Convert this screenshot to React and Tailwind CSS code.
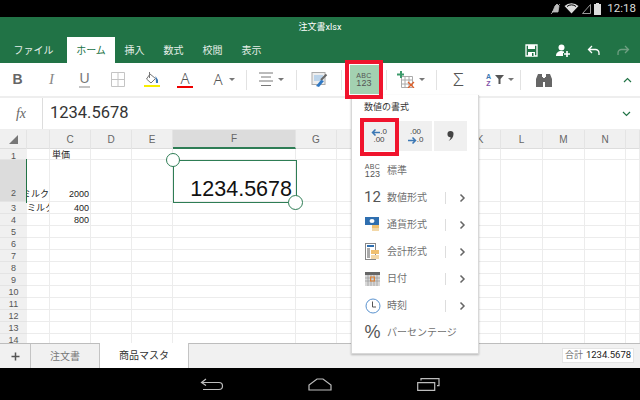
import React from "react";

const JP = "font-['Roboto','Noto_Sans_CJK_JP',sans-serif]";

const colW = "grid-cols-[27px_23px_41px_41px_41px_123px_41px_41px_41px_41px_41px_42px_42px_41px_14px]";
const cols = ["", "", "C", "D", "E", "F", "G", "H", "I", "J", "K", "L", "M", "N", ""];
const rowNums = [1, 2, 3, 4, 5, 6, 7, 8, 9, 10, 11, 12, 13, 14];
const cellData = {
  "1-2": { t: "単価", c: "justify-start pl-[2px] items-end leading-[7px]" },
  "2-1": { t: "ミルク", c: "justify-end items-end pb-[2px] leading-[10px]" },
  "2-2": { t: "2000", c: "justify-end pr-[1px] items-end pb-[2px] leading-[10px]" },
  "3-1": { t: "ミルク", c: "justify-start items-center pt-[1px] leading-[10px]" },
  "3-2": { t: "400", c: "justify-end pr-[1px] items-center pt-[1px] leading-[10px]" },
  "4-2": { t: "800", c: "justify-end pr-[1px] items-center pt-[1px] leading-[10px]" },
};

function Sep() {
  return <div className="w-[1px] h-[20px] bg-[#e2e2e2] shrink-0" />;
}

function Caret() {
  return <span className="inline-block w-0 h-0 border-l-[3px] border-r-[3px] border-t-[3px] border-l-transparent border-r-transparent border-t-[#777777]" />;
}

function Tool({ w, children, className = "" }) {
  return <div className={`h-full flex items-center justify-center shrink-0 ${className}`} style={{ width: w }}>{children}</div>;
}

function Chevron() {
  return (
    <svg width="7" height="10" viewBox="0 0 7 10"><path d="M1.500 1.500 5 5 1.500 8.500" fill="none" stroke="#666" strokeWidth="1.500" /></svg>
  );
}

function AbcIcon() {
  return (
    <div className="flex flex-col items-center leading-none text-[#555555] font-['Liberation_Sans',sans-serif]">
      <span className="text-[7px] leading-[7px] tracking-[0.3px]">ABC</span>
      <span className="text-[9px] leading-[9px] tracking-[0.2px]">123</span>
    </div>
  );
}

const icons = {
  abc: <AbcIcon />,
  n12: <span className="text-[15px] text-[#555555] font-['Roboto',sans-serif]">12</span>,
  money: (
    <svg width="16" height="17" viewBox="0 0 16 17">
      <rect x="0" y="1" width="14" height="8" fill="#2f6fb0" />
      <ellipse cx="7" cy="5" rx="2.500" ry="2" fill="#fff" />
      <rect x="7" y="9" width="7" height="3" fill="#f0c070" />
      <rect x="7" y="12" width="7" height="3" fill="#f3d8a8" />
    </svg>
  ),
  acct: (
    <svg width="16" height="18" viewBox="0 0 16 18">
      <rect x="0.500" y="0.500" width="10" height="16" fill="#fff" stroke="#888" />
      <rect x="2" y="2" width="7" height="2" fill="#2f6fb0" />
      <rect x="2" y="5" width="3" height="10" fill="#aaa" />
      <rect x="6" y="7" width="8" height="4" fill="#f0c070" />
      <rect x="6" y="12" width="8" height="4" fill="#f3d8a8" />
    </svg>
  ),
  date: (
    <svg width="15" height="14" viewBox="0 0 15 14">
      <rect x="0" y="0" width="15" height="14" fill="#d8d8d8" />
      <rect x="0" y="0" width="15" height="3" fill="#666" />
      <path d="M0 6h15M0 9h15M3 3v11M6 3v11M9 3v11M12 3v11" stroke="#999" strokeWidth="0.700" />
      <rect x="5.500" y="5" width="4" height="4" fill="none" stroke="#e08030" />
    </svg>
  ),
  time: (
    <svg width="16" height="16" viewBox="0 0 16 16">
      <circle cx="8" cy="8" r="7" fill="#fff" stroke="#5b93cf" />
      <path d="M7.500 3.500V9H11" fill="none" stroke="#555" />
    </svg>
  ),
  pct: <span className="text-[18px] text-[#555555] font-['Liberation_Sans',sans-serif]">%</span>,
  frac: <span className="text-[20px] text-[#555555] font-['Liberation_Sans',sans-serif]">¼</span>,
};

const menuItems = [
  ["abc", "標準", false],
  ["n12", "数値形式", true],
  ["money", "通貨形式", true],
  ["acct", "会計形式", true],
  ["date", "日付", true],
  ["time", "時刻", true],
  ["pct", "パーセンテージ", false],
  ["frac", "分数", false],
];

function Menu() {
  return (
    <div className={`absolute left-[351px] top-[95px] w-[128px] h-[259px] bg-white overflow-hidden border border-[#d8d8d8] border-t-0 shadow-[0_1px_2px_rgba(0,0,0,0.25)] ${JP}`}>
      <div className="pl-[12px] pt-[6px] h-[26px] text-[9px] leading-[13px] text-[#333333]">数値の書式</div>
      <div className="flex pl-[9px] gap-[2px] h-[30px]">
        <div className="relative w-[36px] h-full bg-[#f0f0f0] flex flex-col items-center justify-center text-[8px] leading-[8px] text-[#444444] font-['Liberation_Sans',sans-serif]">
          <div className="flex items-center"><svg width="9" height="7" viewBox="0 0 9 7"><path d="M9 3.500H2M4.500 .5 1.500 3.500l3 3" fill="none" stroke="#3c78b5" strokeWidth="1.500" /></svg><span>.0</span></div>
          <span>.00</span>
        </div>
        <div className="w-[33px] h-full bg-[#f0f0f0] flex flex-col items-center justify-center text-[8px] leading-[8px] text-[#444444] font-['Liberation_Sans',sans-serif]">
          <span>.00</span>
          <div className="flex items-center"><svg width="9" height="7" viewBox="0 0 9 7"><path d="M0 3.500h7M4.500 .5l3 3-3 3" fill="none" stroke="#3c78b5" strokeWidth="1.500" /></svg><span>.0</span></div>
        </div>
        <div className="w-[33px] h-full bg-[#f0f0f0] flex items-center justify-center">
          <svg width="7" height="10" viewBox="0 0 7 10"><path d="M3.500 0a3 3 0 0 1 3 3.200C6.500 6 4.500 8.500 1.500 10 3 8.500 3.500 7.500 3.600 6.200A3 3 0 0 1 3.500 0Z" fill="#444" /></svg>
        </div>
      </div>
      <div className="pt-[6px]">
        {menuItems.map(([ic, label, sub]) => (
          <div key={label} className="flex items-center h-[27px]">
            <div className="w-[35px] pl-[12px] pr-[6px] flex items-center justify-center shrink-0">{icons[ic]}</div>
            <div className="text-[10px] text-[#707070] w-[58px] shrink-0 whitespace-nowrap">{label}</div>
            {sub && <div className="w-[1px] h-[12px] bg-[#dddddd] shrink-0" />}
            {sub && <div className="ml-[13px]"><Chevron /></div>}
          </div>
        ))}
      </div>
    </div>
  );
}

function Sheet() {
  return (
    <div className="relative h-[213px] overflow-hidden bg-white font-['Liberation_Sans','Noto_Sans_CJK_JP',sans-serif]">
      <div className={`grid ${colW} h-[19px] bg-[#f0f0f0] border-b border-[#dddddd]`}>
        {cols.map((c, i) => (
          <div key={i} className={`flex items-center justify-center text-[10px] text-[#666666] border-r border-[#e4e4e4] ${c === "F" ? "bg-[#dcdcdc] border-b-2 border-b-[#2e7d55] h-[19px]" : ""}`}>
            {i === 0 ? <svg width="9" height="9" viewBox="0 0 9 9"><path d="M9 0V9H0Z" fill="#777" /></svg> : c}
          </div>
        ))}
      </div>
      {rowNums.map((r) => (
        <div key={r} className={`grid ${colW} ${r === 1 ? "h-[11px]" : r === 2 ? "h-[42px]" : "h-[12px]"}`}>
          {cols.map((_, i) => {
            const d = cellData[`${r}-${i}`];
            if (i === 0) {
              return (
                <div key={i} className={`flex items-end justify-center text-[9px] text-[#555555] border-b border-[#e4e4e4] ${r === 1 ? "leading-[6px]" : "leading-[9px]"} ${r === 2 ? "bg-[#dcdcdc] pb-[3px]" : "bg-[#f0f0f0]"}`}>{r}</div>
              );
            }
            return (
              <div key={i} className={`flex overflow-hidden whitespace-nowrap text-[9px] text-[#222222] border-r border-b border-[#ececec] ${d ? d.c : ""}`}>{d ? d.t : ""}</div>
            );
          })}
        </div>
      ))}
      <div className="absolute left-[26px] top-[29px] w-[1px] h-[44px] bg-[#217346]" />
      <div className="absolute left-[173px] top-[30px] w-[124px] h-[43px] border-[1.500px] border-[#2e7d55] flex items-end justify-end pr-[4px] text-[21.500px] leading-[25px] text-[#111111]">1234.5678</div>
      <div className="absolute left-[166px] top-[23px] w-[14px] h-[14px] rounded-full border-[1.500px] border-[#2e7d55] bg-white" />
      <div className="absolute left-[288px] top-[65px] w-[15px] h-[15px] rounded-full border-[1.500px] border-[#2e7d55] bg-white" />
    </div>
  );
}

export default function App() {
  return (
    <div className={`relative w-[640px] h-[400px] overflow-hidden bg-white ${JP}`}>
      {/* status bar */}
      <div className="h-[17px] bg-black flex items-center justify-end pr-[4px] gap-[3px] text-white">
        <svg width="11" height="12" viewBox="0 0 11 12"><path d="M7 1 5 3 3 8l-1 1h6L9 3ZM1 11 10 1" fill="#bbb" stroke="#bbb" strokeWidth="0.800" /></svg>
        <svg width="15" height="11" viewBox="0 0 15 11"><path d="M7.500 10.500 0.500 3A10 10 0 0 1 14.500 3Z" fill="#ddd" /><path d="M3 3.500a7 7 0 0 1 9 0" stroke="#000" fill="none" /></svg>
        <svg width="9" height="10" viewBox="0 0 9 10"><path d="M.5 9.500 8.500.5v9Z" fill="none" stroke="#999" /></svg>
        <svg width="7" height="12" viewBox="0 0 7 12"><path d="M2 0h3v1h2v11H0V1h2Z" fill="#ddd" /></svg>
        <span className="text-[11.500px] leading-[17px] text-[#dddddd] ml-[3px] font-['Roboto',sans-serif]">12:18</span>
      </div>

      {/* green header */}
      <div className="h-[46px] bg-[#217346] text-white">
        <div className="h-[20px] flex items-center justify-center text-[9px] pt-[1px]">注文書xlsx</div>
        <div className="flex h-[26px]">
          <div className="w-[67px] flex items-center justify-center text-[10px] text-[#e6efe9] shrink-0">ファイル</div>
          <div className="w-[48px] bg-white text-[#217346] flex items-center justify-center text-[10px] shrink-0">ホーム</div>
          <div className="w-[39px] flex items-center justify-center text-[10px] text-[#e6efe9] shrink-0">挿入</div>
          <div className="w-[39px] flex items-center justify-center text-[10px] text-[#e6efe9] shrink-0">数式</div>
          <div className="w-[39px] flex items-center justify-center text-[10px] text-[#e6efe9] shrink-0">校閲</div>
          <div className="w-[39px] flex items-center justify-center text-[10px] text-[#e6efe9] shrink-0">表示</div>
          <div className="flex-1" />
          <div className="w-[32px] flex items-center justify-center">
            <svg width="13" height="13" viewBox="0 0 13 13"><path d="M1 1h11v11H1Z" fill="none" stroke="#fff" strokeWidth="1.300" /><rect x="3" y="1" width="7" height="4" fill="#fff" /><rect x="3" y="8" width="7" height="4" fill="#fff" /><rect x="7" y="9" width="1.500" height="3" fill="#217346" /></svg>
          </div>
          <div className="w-[32px] flex items-center justify-center">
            <svg width="14" height="13" viewBox="0 0 14 13"><circle cx="5.500" cy="3.500" r="3" fill="#fff" /><path d="M0 12c0-3 2-5 5.500-5 1 0 2 .2 2.500.5V9H7v3Z" fill="#fff" /><path d="M11 7v6M8 10h6" stroke="#fff" strokeWidth="1.600" /></svg>
          </div>
          <div className="w-[29px] flex items-center justify-center">
            <svg width="13" height="11" viewBox="0 0 13 11"><path d="M5 1 1.500 4.500 5 8M2 4.500h6.500a3.500 3.500 0 0 1 3.500 3.500v2" fill="none" stroke="#fff" strokeWidth="1.300" /></svg>
          </div>
          <div className="w-[32px] pr-[2px] flex items-center justify-center">
            <svg width="13" height="11" viewBox="0 0 13 11"><path d="M8 1l3.500 3.500L8 8M11 4.500H4.500A3.500 3.500 0 0 0 1 8v2" fill="none" stroke="#6f9f82" strokeWidth="1.300" /></svg>
          </div>
        </div>
      </div>

      {/* ribbon toolbar */}
      <div className="h-[33px] flex items-center bg-white border-b-2 border-[#eeeeee] box-content text-[#555555]">
        <Tool w={35}><span className="text-[14px] font-bold font-['Liberation_Sans',sans-serif] text-[#666666]">B</span></Tool>
        <Tool w={33}><span className="text-[15px] italic font-['Liberation_Serif',serif] text-[#888888]">I</span></Tool>
        <Tool w={33}><div className="flex flex-col items-center"><span className="text-[14px] leading-[13px] text-[#777777] font-['Liberation_Sans',sans-serif]">U</span><span className="w-[11px] h-[2px] mt-[1px] bg-[#c4c4c4]" /></div></Tool>
        <Tool w={34}><svg width="14" height="15" viewBox="0 0 14 15"><path d="M.5.500h13v14H.5ZM7 .5v14M.5 7.500h13" fill="none" stroke="#c4c4c4" /></svg></Tool>
        <Tool w={33}>
          <div className="flex flex-col items-center">
            <svg width="15" height="13" viewBox="0 0 15 13"><path d="M6 2 2.500 7 7 11l4.500-4.500Z" fill="#fff" stroke="#777" /><path d="M11.500 4 14 8v3h-2Z" fill="#3c78b5" /><path d="M5.500 0v6" stroke="#777" /></svg>
            <span className="w-[16px] h-[2px] bg-[#f8ee00]" />
          </div>
        </Tool>
        <Tool w={34}><div className="flex flex-col items-center"><span className="text-[15px] leading-[14px] font-['Noto_Sans',sans-serif] font-light text-[#555555]">A</span><span className="w-[16px] h-[2px] mt-[1px] bg-[#ee0000]" /></div></Tool>
        <Tool w={44} className="gap-[6px]"><span className="text-[15px] font-['Noto_Sans',sans-serif] font-light text-[#555555]">A</span><Caret /></Tool>
        <Sep />
        <Tool w={49} className="gap-[5px]">
          <svg width="14" height="15" viewBox="0 0 14 15"><path d="M0 1h14M2 5h10M0 9h14M2 13.500h10" stroke="#777" strokeWidth="1" /></svg>
          <Caret />
        </Tool>
        <Sep />
        <Tool w={44}>
          <svg width="17" height="16" viewBox="0 0 17 16"><rect x="1" y=".5" width="13" height="12" fill="#eee" stroke="#aaa" /><rect x="3" y="3" width="9" height="6" fill="#bcd4ea" /><path d="M15.500 2.500 10 8" stroke="#666" strokeWidth="2" /><path d="M10 8l3 1-5 6-3-1Z" fill="#2f78c4" /></svg>
        </Tool>
        <Sep />
        <div className="w-[44px] h-full flex items-center justify-center shrink-0 relative">
          <div className="absolute left-[3px] top-[-3px] w-[38px] h-[39px] border-[4px] border-[#f0142d] z-20" />
          <div className="w-[29px] h-[29px] bg-[#a3d1b1] flex items-center justify-center"><AbcIcon /></div>
        </div>
        <Sep />
        <Tool w={49} className="gap-[4px] pr-[1px]">
          <svg width="18" height="17" viewBox="0 0 18 17"><path d="M4.500 5.500h11v11h-11ZM4.500 9h11M4.500 13h11M8 5.500v11M12 5.500v11" fill="none" stroke="#aaa" /><path d="M4 0v7M0 3.500h7" stroke="#3d9a6b" strokeWidth="2" /><path d="M11 11l6 6M17 11l-6 6" stroke="#e0602a" strokeWidth="1.300" /></svg>
          <Caret />
        </Tool>
        <Sep />
        <Tool w={43}>
          <span className="text-[19px] leading-[19px] font-['Noto_Sans',sans-serif] font-light text-[#555555]">Σ</span>
        </Tool>
        <Tool w={40} className="gap-[4px]">
          <div className="flex flex-col items-center text-[7px] leading-[7px] font-bold font-['Liberation_Sans',sans-serif]"><span className="text-[#3c78b5]">A</span><span className="text-[#8050a8]">Z</span></div>
          <svg width="9" height="9" viewBox="0 0 9 9"><path d="M0 0h9L5.500 4v5h-2V4Z" fill="#555" /></svg>
          <Caret />
        </Tool>
        <Sep />
        <Tool w={46}>
          <svg width="16" height="14" viewBox="0 0 16 14"><path d="M2 1h4v3h1v10H0V6Z M14 1h-4v3H9v10h7V6Z" fill="#666" /><rect x="7" y="5" width="2" height="4" fill="#666" /></svg>
        </Tool>
        <div className="flex-1" />
        <Tool w={28} className="mr-[-1px]">
          <svg width="9" height="6" viewBox="0 0 9 6"><path d="M1 5 4.500 1.500 8 5" fill="none" stroke="#217346" strokeWidth="1.200" /></svg>
        </Tool>
      </div>

      {/* formula bar */}
      <div className="h-[31px] flex items-center bg-white border-b border-[#eeeeee] box-content">
        <div className="w-[43px] h-full flex items-center justify-center border-r border-[#dddddd] shrink-0 italic text-[14px] text-[#666666] font-['Liberation_Serif',serif]">fx</div>
        <div className="flex-1 pl-[7px] text-[16.500px] text-[#333333] font-['Roboto',sans-serif]">1234.5678</div>
        <div className="w-[28px] flex items-center justify-center">
          <svg width="9" height="6" viewBox="0 0 9 6"><path d="M1 1l3.500 3.500L8 1" fill="none" stroke="#217346" strokeWidth="1.200" /></svg>
        </div>
      </div>

      <Sheet />

      {/* sheet tabs */}
      <div className="relative h-[25px] flex bg-[#f1f1f1] border-t border-[#bdbdbd]">
        <div className="w-[31px] flex items-center justify-center border-r border-[#c4c4c4] shrink-0 text-[#555555]">
          <svg width="11" height="11" viewBox="0 0 11 11"><path d="M5.500 1.500v8M1.500 5.500h8" stroke="#555" strokeWidth="1.500" /></svg>
        </div>
        <div className="w-[69px] flex items-center justify-center border-r border-[#c4c4c4] shrink-0 text-[10px] text-[#777777]">注文書</div>
        <div className="w-[89px] mt-[-1px] bg-white flex items-center justify-center border-r border-[#c4c4c4] shrink-0 text-[10px] text-[#333333]">商品マスタ</div>
        <div className="flex-1" />
        <div className="absolute left-[562px] top-[4px] w-[72px] h-[15px] bg-white border border-[#e4e4e4] flex items-center justify-center gap-[3px] text-[9px]">
          <span className="text-[#777777]">合計</span><span className="text-[#222222] font-['Roboto',sans-serif] text-[9.500px]">1234.5678</span>
        </div>
      </div>

      {/* nav bar */}
      <div className="h-[32px] bg-black flex items-center">
        <div className="w-[200px] shrink-0" />
        <svg width="24" height="13" viewBox="0 0 24 13"><path d="M6 1 1.500 4.500 6 7.500M2 4.500h17a3.500 3.500 0 0 1 0 7H3" fill="none" stroke="#bdbdbd" strokeWidth="1.200" /></svg>
        <div className="w-[84px] shrink-0" />
        <svg width="24" height="13" viewBox="0 0 24 13"><path d="M1 12V7l8-6h6l8 6v5Z" fill="none" stroke="#bdbdbd" strokeWidth="1.200" /></svg>
        <div className="w-[85px] shrink-0" />
        <svg width="23" height="13" viewBox="0 0 23 13"><path d="M.7 4.700h17v7.600H.7ZM4 2.500V.7h18v7h-2" fill="none" stroke="#bdbdbd" strokeWidth="1.200" /></svg>
      </div>

      <Menu />
      <div className="absolute left-[360px] top-[118px] w-[39px] h-[38px] border-[4px] border-[#f0142d]" />
    </div>
  );
}
